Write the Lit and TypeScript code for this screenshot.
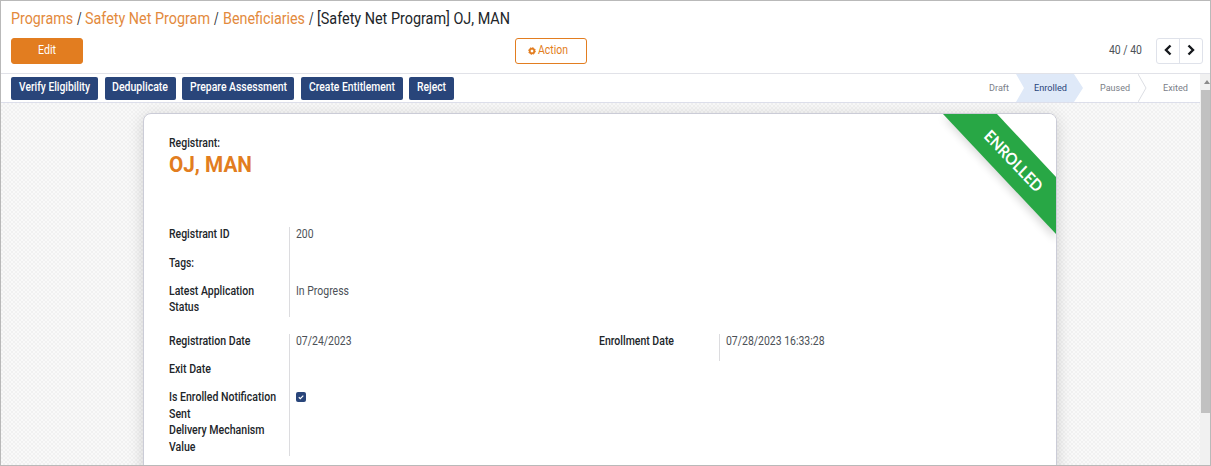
import { LitElement, html, css, svg } from "lit";
import { customElement } from "lit/decorators.js";

/** One line of condensed text, set to a given advance width. */
const line = (text: string, width: number, cls = "") => html`
  <svg class="line ${cls}" width=${width} height="16">
    <text x="0" y="12" textLength=${width} lengthAdjust="spacingAndGlyphs">${text}</text>
  </svg>`;

type Label = [string, number];
interface Field {
  height: number;
  label: Label[];
  value?: Label;
  checked?: boolean;
}

const CRUMBS: [string, number, string][] = [
  ["Programs", 62, "link"],
  ["/", 4.6, ""],
  ["Safety Net Program", 125, "link"],
  ["/", 4.6, ""],
  ["Beneficiaries", 82, "link"],
  ["/", 4.6, ""],
  ["[Safety Net Program] OJ, MAN", 193, ""],
];

const ACTIONS: [string, number, number][] = [
  ["Verify Eligibility", 71, 87],
  ["Deduplicate", 56, 71],
  ["Prepare Assessment", 97, 112],
  ["Create Entitlement", 86, 102],
  ["Reject", 29, 45],
];

const IDENTITY: Field[] = [
  { height: 29, label: [["Registrant ID", 60.5]], value: ["200", 17.5] },
  { height: 28, label: [["Tags:", 25]] },
  { height: 34, label: [["Latest Application", 85], ["Status", 30]], value: ["In Progress", 53] },
];

const DATES: Field[] = [
  { height: 28, label: [["Registration Date", 81.5]], value: ["07/24/2023", 55.5] },
  { height: 28, label: [["Exit Date", 42]] },
  { height: 33, label: [["Is Enrolled Notification", 107], ["Sent", 21.5]], checked: true },
  { height: 34, label: [["Delivery Mechanism", 95.5], ["Value", 26.5]] },
];

const ENROLLMENT: Field[] = [
  { height: 28, label: [["Enrollment Date", 75]], value: ["07/28/2023 16:33:28", 98.5] },
];

@customElement("app-root")
export class AppRoot extends LitElement {
  static styles = css`
    :host {
      display: flex;
      flex-direction: column;
      box-sizing: border-box;
      height: 466px;
      border: 1px solid #b9b9b9;
      overflow: hidden;
      background: #fff;
      color: #212529;
      font-family: Roboto, "Liberation Sans", sans-serif;
      font-size: 12px;
    }
    * { box-sizing: border-box; }
    svg { display: block; flex: none; }
    text { fill: currentColor; }
    .line { overflow: visible; }
    .crumbs { display: flex; gap: 3.9px; height: 20px; margin: 11px 0 0 10px; font-size: 16px; }
    .link { color: #e38a3d; }
    .toolbar {
      display: grid;
      grid-template-columns: 504px 1fr auto;
      align-items: center;
      height: 26px;
      margin: 6px 7px 9px 10px;
    }
    .btn {
      display: flex;
      align-items: center;
      justify-content: center;
      width: 72px;
      height: 26px;
      padding-bottom: 2px;
      border: 1px solid #e27d20;
      border-radius: 3px;
      background: #e27d20;
      color: #fff;
    }
    .btn.outline { background: #fff; color: #e27d20; gap: 2px; justify-content: start; padding-left: 12px; }
    .gear { margin-top: 2px; }
    .pager { display: flex; align-items: center; gap: 14px; color: #4c5157; }
    .pager .line { margin-bottom: 2px; }
    .arrows { display: flex; width: 47px; height: 26px; border: 1px solid #dfe2ea; border-radius: 3px; color: #15181c; }
    .arrow { flex: 1; display: grid; place-items: center; padding-bottom: 3px; }
    .arrow + .arrow { border-left: 1px solid #dfe2ea; }
    .body { flex: 1; display: flex; min-height: 0; border-top: 1px solid #e1e2e8; }
    .main { flex: 1; display: flex; flex-direction: column; min-width: 0; }
    .status {
      display: flex;
      justify-content: space-between;
      height: 29px;
      padding-left: 10px;
      border-bottom: 1px solid #dcdeea;
    }
    .actions { display: flex; gap: 6.5px; padding-top: 3px; }
    .action {
      display: flex;
      justify-content: center;
      height: 23px;
      padding-top: 2px;
      border-radius: 2px;
      background: #29457a;
      color: #fff;
    }
    .medium { font-weight: 500; }
    .steps { display: flex; font-size: 9.5px; color: #7b8088; }
    .step { display: flex; padding-top: 5px; }
    .draft { width: 27px; }
    .enrolled {
      width: 67px;
      padding-left: 17.5px;
      background: #dfe9f8;
      color: #29457a;
      clip-path: polygon(0 0, 58px 0, 100% 50%, 58px 100%, 0 100%, 8px 50%);
    }
    .paused { width: 55px; padding-left: 16.5px; }
    .exited { width: 53px; padding-left: 15.5px; }
    .canvas {
      flex: 1;
      min-height: 0;
      padding: 10px 143px 0 142px;
      overflow: hidden;
      background: repeating-conic-gradient(#f1f1f1 0 25%, #f9f9f9 0 50%) 0 0 / 4px 4px;
    }
    .sheet {
      position: relative;
      height: 380px;
      padding: 21px 25px 0;
      border: 1px solid #cbccd7;
      border-radius: 8px;
      background: #fff;
      box-shadow: 0 3px 16px rgba(0, 0, 0, 0.16);
    }
    .ribbon { position: absolute; top: 0; right: 0; }
    .ribbon text { font: 700 16px Lato, sans-serif; fill: #fff; }
    .name { margin-top: 1px; font-size: 22px; font-weight: 700; color: #e27d20; }
    .groups { display: grid; grid-template-columns: 430px 1fr; }
    .identity { margin-top: 48px; }
    .dates { margin-top: 16px; align-items: start; }
    .field { display: grid; grid-template-columns: 120px auto; }
    .label { font-weight: 500; }
    .dates .label .line + .line { margin-top: 0.5px; }
    .value { border-left: 1px solid #dcdcdf; padding-left: 6px; color: #4c5157; }
    .first .value { margin-top: 1px; }
    .first .value .line { margin-top: -1px; }
    .check { margin-top: 3px; }
    .scroll { width: 10px; padding: 16px 0 0 1px; background: #f1f1f1; position: relative; }
    .up { position: absolute; top: 6px; left: 4px; }
    .thumb { height: 323px; background: #c1c1c1; }
  `;

  private group(fields: Field[]) {
    return html`<div>
      ${fields.map(
        (f, i) => html`<div class="field ${i ? "" : "first"}" style="height:${f.height}px">
          <div class="label">${f.label.map(([t, w]) => line(t, w))}</div>
          <div class="value">
            ${f.value ? line(f.value[0], f.value[1]) : ""}
            ${f.checked
              ? html`<svg class="check" width="10" height="10">
                  <rect width="10" height="10" rx="2" fill="#29457a" />
                  <path d="M2.8 5.2 4.3 6.6 7.3 3.6" fill="none" stroke="#fff" stroke-width="1.2" />
                </svg>`
              : ""}
          </div>
        </div>`
      )}
    </div>`;
  }

  private chevron(d: string) {
    return html`<svg width="8" height="12">${svg`<path d=${d} fill="none" stroke="currentColor" stroke-width="2.4" />`}</svg>`;
  }

  render() {
    return html`
      <div class="crumbs">${CRUMBS.map(([t, w, c]) => line(t, w, c))}</div>
      <div class="toolbar">
        <div class="btn">${line("Edit", 18)}</div>
        <div class="btn outline">
          <svg class="gear" width="8" height="8" viewBox="-4 -4 8 8">
            <circle r="2.3" fill="none" stroke="currentColor" stroke-width="1.8" />
            <circle r="3.4" fill="none" stroke="currentColor" stroke-width="1" stroke-dasharray="1.3 1.37" />
          </svg>
          ${line("Action", 30)}
        </div>
        <div class="pager">
          ${line("40 / 40", 33)}
          <div class="arrows">
            <div class="arrow">${this.chevron("M6.5 1.5 2 6l4.5 4.5")}</div>
            <div class="arrow">${this.chevron("M1.5 1.5 6 6l-4.5 4.5")}</div>
          </div>
        </div>
      </div>
      <div class="body">
        <div class="main">
          <div class="status">
            <div class="actions">
              ${ACTIONS.map(([t, w, box]) => html`<div class="action medium" style="width:${box}px">${line(t, w)}</div>`)}
            </div>
            <div class="steps">
              <div class="step draft">${line("Draft", 20)}</div>
              <div class="step enrolled">${line("Enrolled", 33)}</div>
              <div class="step paused">${line("Paused", 30)}</div>
              <svg width="9" height="28"><path d="M0 0 8 14 0 28" fill="none" stroke="#dcdee4" /></svg>
              <div class="step exited">${line("Exited", 25)}</div>
            </div>
          </div>
          <div class="canvas">
            <div class="sheet">
              <div class="medium">${line("Registrant:", 51)}</div>
              <div class="name">
                <svg class="line" width="84" height="26"><text x="0" y="20" textLength="83" lengthAdjust="spacingAndGlyphs">OJ, MAN</text></svg>
              </div>
              <div class="groups identity">${this.group(IDENTITY)}</div>
              <div class="groups dates">${this.group(DATES)}${this.group(ENROLLMENT)}</div>
              <svg class="ribbon" width="124" height="132">
                <defs><filter id="soft" x="-20%" y="-20%" width="140%" height="140%"><feGaussianBlur stdDeviation="4" /></filter></defs>
                <path d="M11 3H65L124 66V126Z" fill="#000" opacity=".15" filter="url(#soft)" />
                <path d="M64 0H116Q124 0 124 8V63Z" fill="#fff" />
                <path d="M11 0H65L124 63V120Z" fill="#28a745" />
                <text transform="matrix(.69 .73 -.69 .73 51 23)" textLength="77" lengthAdjust="spacingAndGlyphs">ENROLLED</text>
              </svg>
            </div>
          </div>
        </div>
        <div class="scroll">
          <svg class="up" width="6" height="4"><path d="M0 4 3 0 6 4Z" fill="#8b8b8b" /></svg>
          <div class="thumb"></div>
        </div>
      </div>
    `;
  }
}
